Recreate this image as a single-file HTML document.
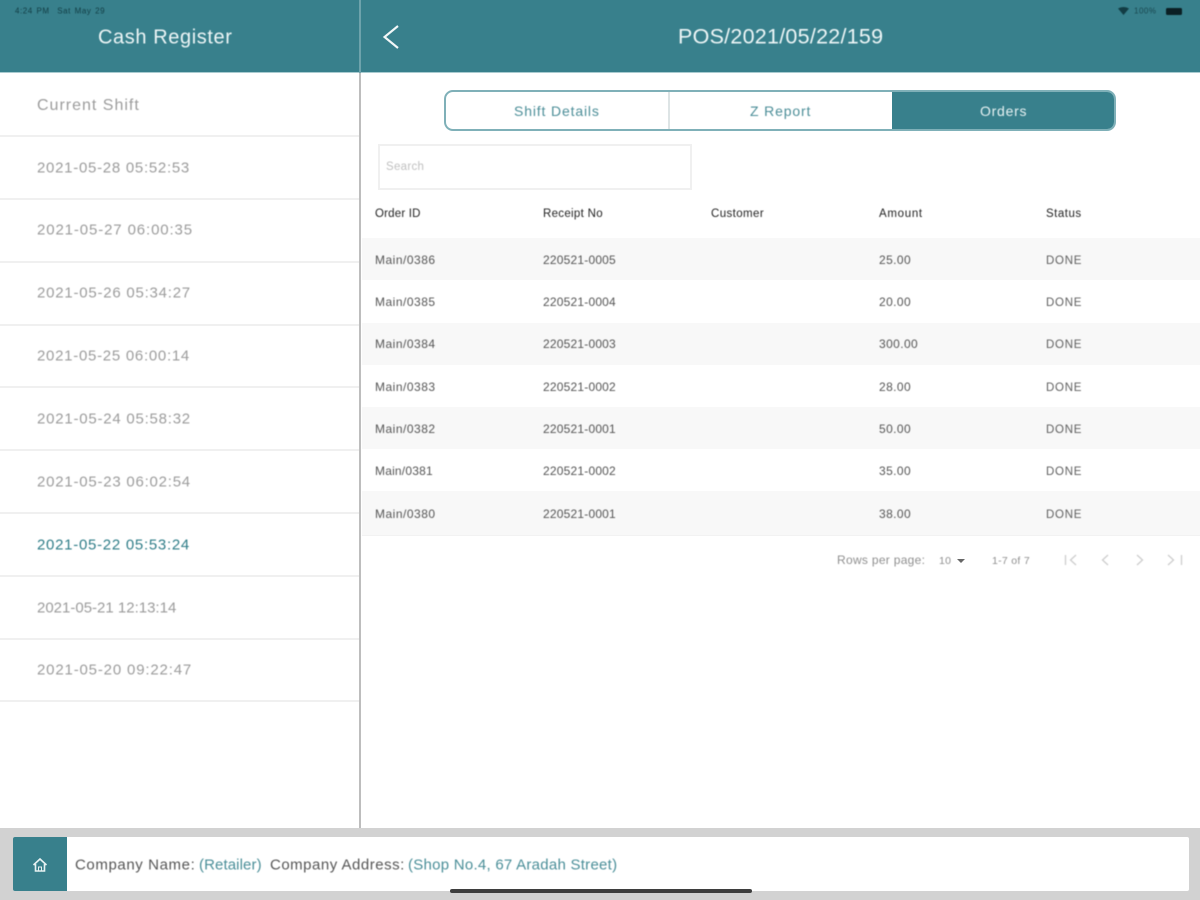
<!DOCTYPE html>
<html><head><meta charset="utf-8"><title>Cash Register</title>
<style>
html,body{margin:0;padding:0;width:1200px;height:900px;overflow:hidden;background:#fff;font-family:"Liberation Sans",sans-serif}
.a{position:absolute}
.t{position:absolute;white-space:nowrap;transform:translateY(-50%);filter:blur(.45px)}
.li{font-size:15px;color:#9c9c9c;left:37px;letter-spacing:.72px;margin-top:1px}
.ln{position:absolute;left:0;width:359px;height:2px;background:#f0f0f0}
.r{position:absolute;left:362px;width:838px;height:42px;background:#f8f8f8}
.c{font-size:12px;color:#555;letter-spacing:.5px}
.n{letter-spacing:.2px}
.m{letter-spacing:.4px}
.h{font-size:11.5px;color:#222;letter-spacing:.4px;margin-top:1px}
.d{font-size:11.5px;color:#5e5e5e;letter-spacing:.75px;margin-top:1px}
.p{font-size:12px;color:#8f8f8f;letter-spacing:.3px;margin-top:1px}
.tb{font-size:14px;letter-spacing:.85px;color:#4c8e98}
.f{font-size:15px;top:865px;color:#555}
.g{color:#4a8e98}
</style></head><body>
<div class="a" style="left:0;top:0;width:1200px;height:72px;background:#38808c"></div>
<div class="a" style="left:0;top:72px;width:1200px;height:1px;background:#a9cbd0"></div>
<div class="a" style="left:359px;top:0;width:2px;height:828px;background:#bdbdbd"></div>
<div class="a" style="left:359px;top:0;width:2px;height:73px;background:#6ea3ac"></div>

<div class="t" style="left:15px;top:11px;font-size:8px;color:#123c44;letter-spacing:.55px;word-spacing:1px">4:24 PM &nbsp;Sat May 29</div>
<div class="t" style="left:98px;top:38px;font-size:20px;color:#eef6f7;letter-spacing:.6px">Cash Register</div>
<svg class="a" style="left:380px;top:22px;filter:blur(.3px)" width="24" height="30" viewBox="0 0 24 30"><path d="M18 4 L4.500 15 L18 26" fill="none" stroke="#f2f7f8" stroke-width="2.100"/></svg>
<div class="t" style="left:678px;top:37px;font-size:21.5px;color:#eef6f7;letter-spacing:.25px">POS/2021/05/22/159</div>

<svg class="a" style="left:1116px;top:5px;filter:blur(.4px)" width="70" height="12" viewBox="0 0 70 12">
<path d="M2 3.500 Q7.500 0.500 13 3.500 L7.500 10 Z" fill="#123c44"/>
<rect x="50" y="3" width="16" height="7" rx="1.500" fill="#0b1f24"/>
</svg>
<div class="t" style="left:1134px;top:11px;font-size:8px;color:#1a4750;letter-spacing:.5px">100%</div>

<div class="t li" style="top:105px;font-size:16px;letter-spacing:1px">Current Shift</div><div class="ln" style="top:135px"></div>
<div class="t li" style="top:167px">2021-05-28 05:52:53</div><div class="ln" style="top:198px"></div>
<div class="t li" style="top:229px;letter-spacing:.88px">2021-05-27 06:00:35</div><div class="ln" style="top:261px"></div>
<div class="t li" style="top:292px;letter-spacing:.77px">2021-05-26 05:34:27</div><div class="ln" style="top:324px"></div>
<div class="t li" style="top:355px">2021-05-25 06:00:14</div><div class="ln" style="top:386px"></div>
<div class="t li" style="top:418px;letter-spacing:.77px">2021-05-24 05:58:32</div><div class="ln" style="top:449px"></div>
<div class="t li" style="top:481px;letter-spacing:.77px">2021-05-23 06:02:54</div><div class="ln" style="top:512px"></div>
<div class="t li" style="top:544px;color:#2f7d88">2021-05-22 05:53:24</div><div class="ln" style="top:575px"></div>
<div class="t li" style="top:607px;letter-spacing:0">2021-05-21 12:13:14</div><div class="ln" style="top:638px"></div>
<div class="t li" style="top:669px;letter-spacing:.83px">2021-05-20 09:22:47</div><div class="ln" style="top:700px"></div>

<div class="a" style="left:444px;top:90px;width:672px;height:41px;box-sizing:border-box;border:2px solid #7fb0b8;border-radius:9px;background:#fff;overflow:hidden">
<div class="a" style="left:446px;top:-2px;width:226px;height:41px;background:#38808c"></div>
<div class="a" style="left:222px;top:0;width:2px;height:38px;background:#dde4e5"></div>
</div>
<div class="t tb" style="left:514px;top:111px">Shift Details</div>
<div class="t tb" style="left:750px;top:111px">Z Report</div>
<div class="t tb" style="left:980px;top:111px;color:#e8f2f3;letter-spacing:.75px">Orders</div>

<div class="a" style="left:378px;top:144px;width:314px;height:46px;box-sizing:border-box;border:2px solid #f0f0f0"></div>
<div class="t" style="left:386px;top:167px;font-size:11.5px;color:#c0c0c0;letter-spacing:.3px">Search</div>

<div class="t h" style="left:375px;top:213px;letter-spacing:.2px">Order ID</div>
<div class="t h" style="left:543px;top:213px;letter-spacing:.3px">Receipt No</div>
<div class="t h" style="left:711px;top:213px">Customer</div>
<div class="t h" style="left:879px;top:213px;letter-spacing:.7px">Amount</div>
<div class="t h" style="left:1046px;top:213px;letter-spacing:.5px">Status</div>

<div class="r" style="top:238px"></div>
<div class="r" style="top:323px"></div>
<div class="r" style="top:407px"></div>
<div class="r" style="top:491px;height:44px"></div>
<div class="a" style="left:362px;top:535px;width:838px;height:1px;background:#f2f2f2"></div>

<div class="t c" style="left:375px;top:260px">Main/0386</div><div class="t c n" style="left:543px;top:260px">220521-0005</div><div class="t c m" style="left:879px;top:260px">25.00</div><div class="t d" style="left:1046px;top:260px">DONE</div>
<div class="t c" style="left:375px;top:302px">Main/0385</div><div class="t c n" style="left:543px;top:302px">220521-0004</div><div class="t c m" style="left:879px;top:302px">20.00</div><div class="t d" style="left:1046px;top:302px">DONE</div>
<div class="t c" style="left:375px;top:344px">Main/0384</div><div class="t c n" style="left:543px;top:344px">220521-0003</div><div class="t c m" style="left:879px;top:344px">300.00</div><div class="t d" style="left:1046px;top:344px">DONE</div>
<div class="t c" style="left:375px;top:387px">Main/0383</div><div class="t c n" style="left:543px;top:387px">220521-0002</div><div class="t c m" style="left:879px;top:387px">28.00</div><div class="t d" style="left:1046px;top:387px">DONE</div>
<div class="t c" style="left:375px;top:429px">Main/0382</div><div class="t c n" style="left:543px;top:429px">220521-0001</div><div class="t c m" style="left:879px;top:429px">50.00</div><div class="t d" style="left:1046px;top:429px">DONE</div>
<div class="t c" style="left:375px;top:471px;letter-spacing:.2px">Main/0381</div><div class="t c n" style="left:543px;top:471px">220521-0002</div><div class="t c m" style="left:879px;top:471px">35.00</div><div class="t d" style="left:1046px;top:471px">DONE</div>
<div class="t c" style="left:375px;top:514px">Main/0380</div><div class="t c n" style="left:543px;top:514px">220521-0001</div><div class="t c m" style="left:879px;top:514px">38.00</div><div class="t d" style="left:1046px;top:514px">DONE</div>

<div class="t p" style="left:837px;top:559px">Rows per page:</div>
<div class="t p" style="left:939px;top:560px;font-size:10.500px">10</div>
<svg class="a" style="left:956px;top:558px" width="10" height="6" viewBox="0 0 10 6"><path d="M1 1 H9 L5 5 Z" fill="#666"/></svg>
<div class="t p" style="left:992px;top:560px;font-size:10.500px">1-7 of 7</div>
<svg class="a" style="left:1060px;top:552px;filter:blur(.4px)" width="130" height="16" viewBox="0 0 130 16" fill="none" stroke="#cdcdcd" stroke-width="1.300">
<path d="M5.500 3 V13 M16 3 L10.500 8 L16 13"/><path d="M48 3 L42.500 8 L48 13"/><path d="M77 3 L82.500 8 L77 13"/><path d="M108 3 L113.500 8 L108 13 M121.500 3 V13"/>
</svg>

<div class="a" style="left:0;top:828px;width:1200px;height:72px;background:#d2d2d2"></div>
<div class="a" style="left:13px;top:837px;width:1176px;height:54px;background:#fff;border-radius:2px"></div>
<div class="a" style="left:13px;top:837px;width:54px;height:54px;background:#38808c;border-radius:2px 0 0 2px"></div>
<svg class="a" style="left:32px;top:857px;filter:blur(.3px)" width="16" height="16" viewBox="0 0 16 16"><path d="M1.500 8 L8 2 L14.500 8 M3.500 7 V14 H12.500 V7" fill="none" stroke="#e6f1f2" stroke-width="1.600"/><path d="M6.500 14 V10 H9.500 V14" fill="none" stroke="#e6f1f2" stroke-width="1"/></svg>
<div class="t f" style="left:75px;letter-spacing:.6px">Company Name:</div>
<div class="t f g" style="left:199px;letter-spacing:.1px">(Retailer)</div>
<div class="t f" style="left:270px;letter-spacing:.5px">Company Address:</div>
<div class="t f g" style="left:408px;letter-spacing:.26px">(Shop No.4, 67 Aradah Street)</div>
<div class="a" style="left:450px;top:889px;width:302px;height:4px;background:#3e3e3e;border-radius:2px"></div>
</body></html>
